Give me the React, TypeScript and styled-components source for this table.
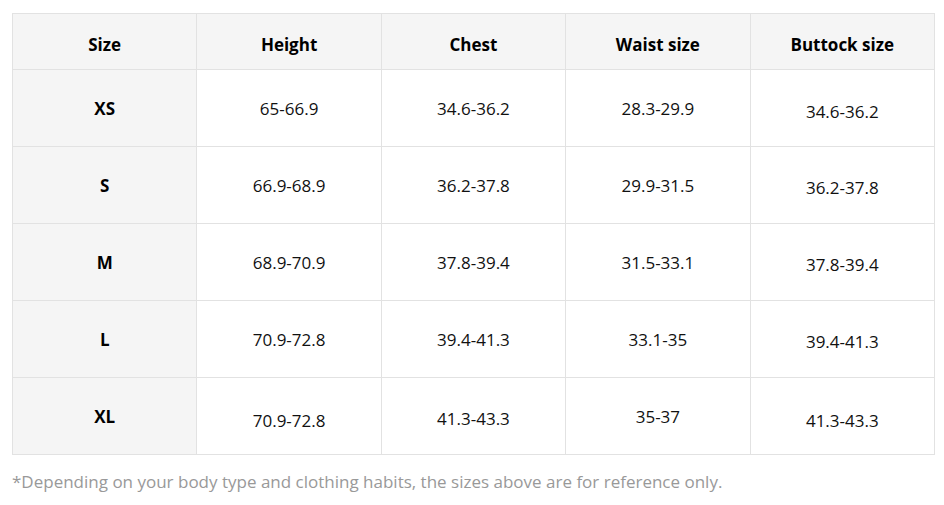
import React from "react";
import styled, { createGlobalStyle } from "styled-components";

const Global = createGlobalStyle`
  html, body { margin: 0; padding: 0; background: #ffffff; }
  body { font-family: "Open Sans", "Noto Sans", sans-serif; color: #111; }
`;

const Page = styled.div`
  padding: 13px 9px 0 12px;
`;

const Table = styled.table`
  width: 923px;
  border-collapse: collapse;
  table-layout: fixed;
`;

const HeadCell = styled.th`
  height: 50px;
  padding: 5px 0 0;
  background: #f5f5f5;
  border: 1px solid #e2e2e2;
  font-size: 17px;
  font-weight: 700;
  color: #000;
  text-align: center;
  vertical-align: middle;
`;

const SizeCell = styled.td`
  height: 76px;
  padding: 0;
  background: #f5f5f5;
  border: 1px solid #e2e2e2;
  font-size: 17px;
  font-weight: 700;
  color: #000;
  text-align: center;
  vertical-align: middle;
`;

const ValueCell = styled.td<{ $shift: number }>`
  height: ${(p) => 76 - p.$shift * 2}px;
  padding: ${(p) => p.$shift * 2}px 0 0;
  background: #ffffff;
  border: 1px solid #e2e2e2;
  font-size: 17px;
  font-weight: 400;
  color: #111;
  text-align: center;
  vertical-align: middle;
`;

const Note = styled.p`
  margin: 15px 0 0;
  font-size: 17px;
  color: #999;
`;

const headers = ["Size", "Height", "Chest", "Waist size", "Buttock size"];

const rows: { size: string; values: string[]; shifts: number[] }[] = [
  { size: "XS", values: ["65-66.9", "34.6-36.2", "28.3-29.9", "34.6-36.2"], shifts: [0, 0, 0, 3] },
  { size: "S", values: ["66.9-68.9", "36.2-37.8", "29.9-31.5", "36.2-37.8"], shifts: [0, 0, 0, 2] },
  { size: "M", values: ["68.9-70.9", "37.8-39.4", "31.5-33.1", "37.8-39.4"], shifts: [0, 0, 0, 2] },
  { size: "L", values: ["70.9-72.8", "39.4-41.3", "33.1-35", "39.4-41.3"], shifts: [0, 0, 0, 2] },
  { size: "XL", values: ["70.9-72.8", "41.3-43.3", "35-37", "41.3-43.3"], shifts: [4, 2, 0, 4] },
];

export default function App() {
  return (
    <Page>
      <Global />
      <Table>
        <thead>
          <tr>
            {headers.map((h) => (
              <HeadCell key={h}>{h}</HeadCell>
            ))}
          </tr>
        </thead>
        <tbody>
          {rows.map((r) => (
            <tr key={r.size}>
              <SizeCell>{r.size}</SizeCell>
              {r.values.map((v, i) => (
                <ValueCell key={i} $shift={r.shifts[i]}>
                  {v}
                </ValueCell>
              ))}
            </tr>
          ))}
        </tbody>
      </Table>
      <Note>*Depending on your body type and clothing habits, the sizes above are for reference only.</Note>
    </Page>
  );
}
